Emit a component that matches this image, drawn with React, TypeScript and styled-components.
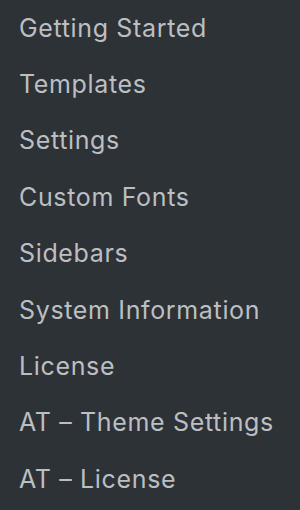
import React from "react";
import styled, { createGlobalStyle } from "styled-components";

const items = [
  "Getting Started",
  "Templates",
  "Settings",
  "Custom Fonts",
  "Sidebars",
  "System Information",
  "License",
  "AT – Theme Settings",
  "AT – License",
];

const GlobalStyle = createGlobalStyle`
  html, body {
    margin: 0;
    padding: 0;
    background: #2d3237;
  }
`;

export default function App() {
  return (
    <>
      <GlobalStyle />
      <Menu>
        {items.map((label) => (
          <MenuItem key={label}>
            <MenuLink href="#">{label}</MenuLink>
          </MenuItem>
        ))}
      </Menu>
    </>
  );
}

const Menu = styled.ul`
  margin: 0;
  padding: 0 0 0 19px;
  width: 300px;
  height: 510px;
  box-sizing: border-box;
  list-style: none;
  background: #2d3237;
  display: flex;
  flex-direction: column;
`;

const MenuItem = styled.li`
  height: 56.4px;
  display: flex;
  align-items: center;
`;

const MenuLink = styled.a`
  font-family: Inter, "Noto Sans", sans-serif;
  font-size: 25px;
  line-height: 1;
  color: #bcbfc2;
  text-decoration: none;
  letter-spacing: 0.65px;
`;
